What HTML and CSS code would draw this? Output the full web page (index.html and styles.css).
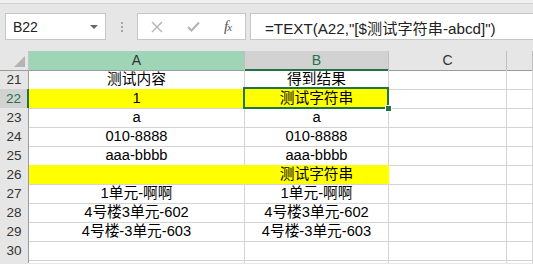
FILE: index.html
```html
<!DOCTYPE html>
<html lang="zh-CN">
<head>
    <meta charset="UTF-8">
    <meta name="viewport" content="width=device-width, initial-scale=1.0">
    <title>TEXT 函数示例</title>
    <link rel="stylesheet" href="styles.css">
</head>
<body>
    <div class="top-edge"></div>

    <!-- 编辑栏 -->
    <div class="formula-bar">
        <div class="name-box">
            <span>B22</span>
            <span class="caret"></span>
        </div>
        <div class="grip"><i></i><i></i><i></i></div>
        <div class="fx-buttons">
            <svg class="btn-icon" width="12" height="12" viewBox="0 0 12 12">
                <path d="M1 1 L11 11 M11 1 L1 11" stroke="#b3b3b3" stroke-width="1.4" fill="none"/>
            </svg>
            <svg class="btn-icon" width="13" height="11" viewBox="0 0 13 11">
                <path d="M1 6 L4.5 9.5 L12 1.5" stroke="#b3b3b3" stroke-width="2" fill="none"/>
            </svg>
            <span class="fx">f<sub>x</sub></span>
        </div>
        <div class="formula-input">=TEXT(A22,"[$测试字符串-abcd]")</div>
    </div>

    <!-- 工作表 -->
    <div class="sheet">
        <div class="row head-row">
            <div class="corner"><span class="corner-tri"></span></div>
            <div class="col-head col-a">A</div>
            <div class="col-head col-b">B</div>
            <div class="col-head">C</div>
            <div class="col-head"></div>
        </div>
        <div class="row">
            <div class="row-head">21</div>
            <div class="cell">测试内容</div>
            <div class="cell">得到结果</div>
            <div class="cell"></div>
            <div class="cell"></div>
        </div>
        <div class="row">
            <div class="row-head active">22</div>
            <div class="cell fill">1</div>
            <div class="cell fill current">
                测试字符串
                <div class="selection"><span class="handle"></span></div>
            </div>
            <div class="cell"></div>
            <div class="cell"></div>
        </div>
        <div class="row">
            <div class="row-head">23</div>
            <div class="cell">a</div>
            <div class="cell">a</div>
            <div class="cell"></div>
            <div class="cell"></div>
        </div>
        <div class="row">
            <div class="row-head">24</div>
            <div class="cell">010-8888</div>
            <div class="cell">010-8888</div>
            <div class="cell"></div>
            <div class="cell"></div>
        </div>
        <div class="row">
            <div class="row-head">25</div>
            <div class="cell">aaa-bbbb</div>
            <div class="cell">aaa-bbbb</div>
            <div class="cell"></div>
            <div class="cell"></div>
        </div>
        <div class="row">
            <div class="row-head">26</div>
            <div class="cell fill"></div>
            <div class="cell fill">测试字符串</div>
            <div class="cell"></div>
            <div class="cell"></div>
        </div>
        <div class="row">
            <div class="row-head">27</div>
            <div class="cell">1单元-啊啊</div>
            <div class="cell">1单元-啊啊</div>
            <div class="cell"></div>
            <div class="cell"></div>
        </div>
        <div class="row">
            <div class="row-head">28</div>
            <div class="cell">4号楼3单元-602</div>
            <div class="cell">4号楼3单元-602</div>
            <div class="cell"></div>
            <div class="cell"></div>
        </div>
        <div class="row">
            <div class="row-head">29</div>
            <div class="cell">4号楼-3单元-603</div>
            <div class="cell">4号楼-3单元-603</div>
            <div class="cell"></div>
            <div class="cell"></div>
        </div>
        <div class="row">
            <div class="row-head">30</div>
            <div class="cell"></div>
            <div class="cell"></div>
            <div class="cell"></div>
            <div class="cell"></div>
        </div>
        <div class="row">
            <div class="row-head"></div>
            <div class="cell"></div>
            <div class="cell"></div>
            <div class="cell"></div>
            <div class="cell"></div>
        </div>
    </div>
</body>
</html>
```

FILE: styles.css
```css
* {
    margin: 0;
    padding: 0;
    box-sizing: border-box;
}

body {
    background: #e6e6e6;
    font-family: "Liberation Sans", "Noto Sans CJK SC", sans-serif;
    color: #000;
    width: 533px;
    height: 264px;
    overflow: hidden;
}

.top-edge {
    height: 4px;
    background: #f0f0f0;
    border-bottom: 1px solid #d4d4d4;
}

/* 编辑栏 */
.formula-bar {
    display: flex;
    align-items: stretch;
    height: 27px;
    margin: 9px 0 11px 5px;
}

.name-box {
    width: 101px;
    background: #fff;
    border: 1px solid #c6c6c6;
    display: flex;
    align-items: center;
    justify-content: space-between;
    padding: 0 7px 0 7px;
    font-size: 14px;
    color: #222;
}

.caret {
    width: 0;
    height: 0;
    border-left: 4px solid transparent;
    border-right: 4px solid transparent;
    border-top: 4px solid #666;
}

.grip {
    width: 31px;
    display: flex;
    flex-direction: column;
    align-items: center;
    justify-content: center;
    gap: 2px;
}

.grip i {
    display: block;
    width: 2px;
    height: 2px;
    background: #a6a6a6;
}

.fx-buttons {
    width: 109px;
    background: #fff;
    border: 1px solid #c6c6c6;
    display: flex;
    align-items: center;
    padding-left: 13px;
    gap: 24px;
}

.fx {
    font-family: "Liberation Serif", serif;
    font-style: italic;
    font-size: 15px;
    color: #555;
}

.fx sub {
    font-size: 11px;
    vertical-align: 0;
    margin-left: -1px;
}

.formula-input {
    flex: 1;
    margin-left: 4px;
    background: #fff;
    border: 1px solid #c6c6c6;
    border-right: none;
    display: flex;
    align-items: center;
    padding-left: 14px;
    font-size: 15.2px;
    color: #222;
    white-space: nowrap;
}

/* 工作表 */
.sheet {
    background: #fff;
    height: 212px;
    overflow: hidden;
}

.row {
    display: grid;
    grid-template-columns: 29px 216px 144px 118px 1fr;
    height: 19px;
}

.head-row {
    background: #e6e6e6;
}

.corner {
    position: relative;
    border-right: 1px solid #c6c6c6;
    border-bottom: 1px solid #9b9b9b;
}

.corner-tri {
    position: absolute;
    right: 3px;
    bottom: 3px;
    width: 0;
    height: 0;
    border-left: 11px solid transparent;
    border-bottom: 11px solid #b4b4b4;
}

.col-head {
    border-right: 1px solid #c0c0c0;
    border-bottom: 1px solid #9b9b9b;
    text-align: center;
    font-size: 14px;
    line-height: 18px;
    color: #333;
}

.col-a {
    background: #9fd5b7;
}

.col-b {
    background: #d2d2d2;
    color: #217346;
    border-bottom: 2px solid #217346;
}

.row-head {
    background: #e6e6e6;
    border-right: 1px solid #9b9b9b;
    border-bottom: 1px solid #cdcdcd;
    text-align: center;
    font-size: 13.5px;
    line-height: 19px;
    color: #333;
}

.row-head.active {
    background: #d2d2d2;
    color: #217346;
    border-right: 2px solid #217346;
}

.cell {
    border-right: 1px solid #d4d4d4;
    border-bottom: 1px solid #d4d4d4;
    text-align: center;
    font-size: 14.7px;
    line-height: 18px;
    white-space: nowrap;
}

.cell.fill {
    background: #ffff00;
    border-right-color: #ffff00;
}

.cell.current {
    position: relative;
}

.selection {
    position: absolute;
    top: -2px;
    left: -2px;
    right: -1px;
    bottom: -1px;
    border: 2px solid #217346;
}

.handle {
    position: absolute;
    right: -5px;
    bottom: -5px;
    width: 7px;
    height: 7px;
    background: #217346;
    border: 1px solid #fff;
}
```
